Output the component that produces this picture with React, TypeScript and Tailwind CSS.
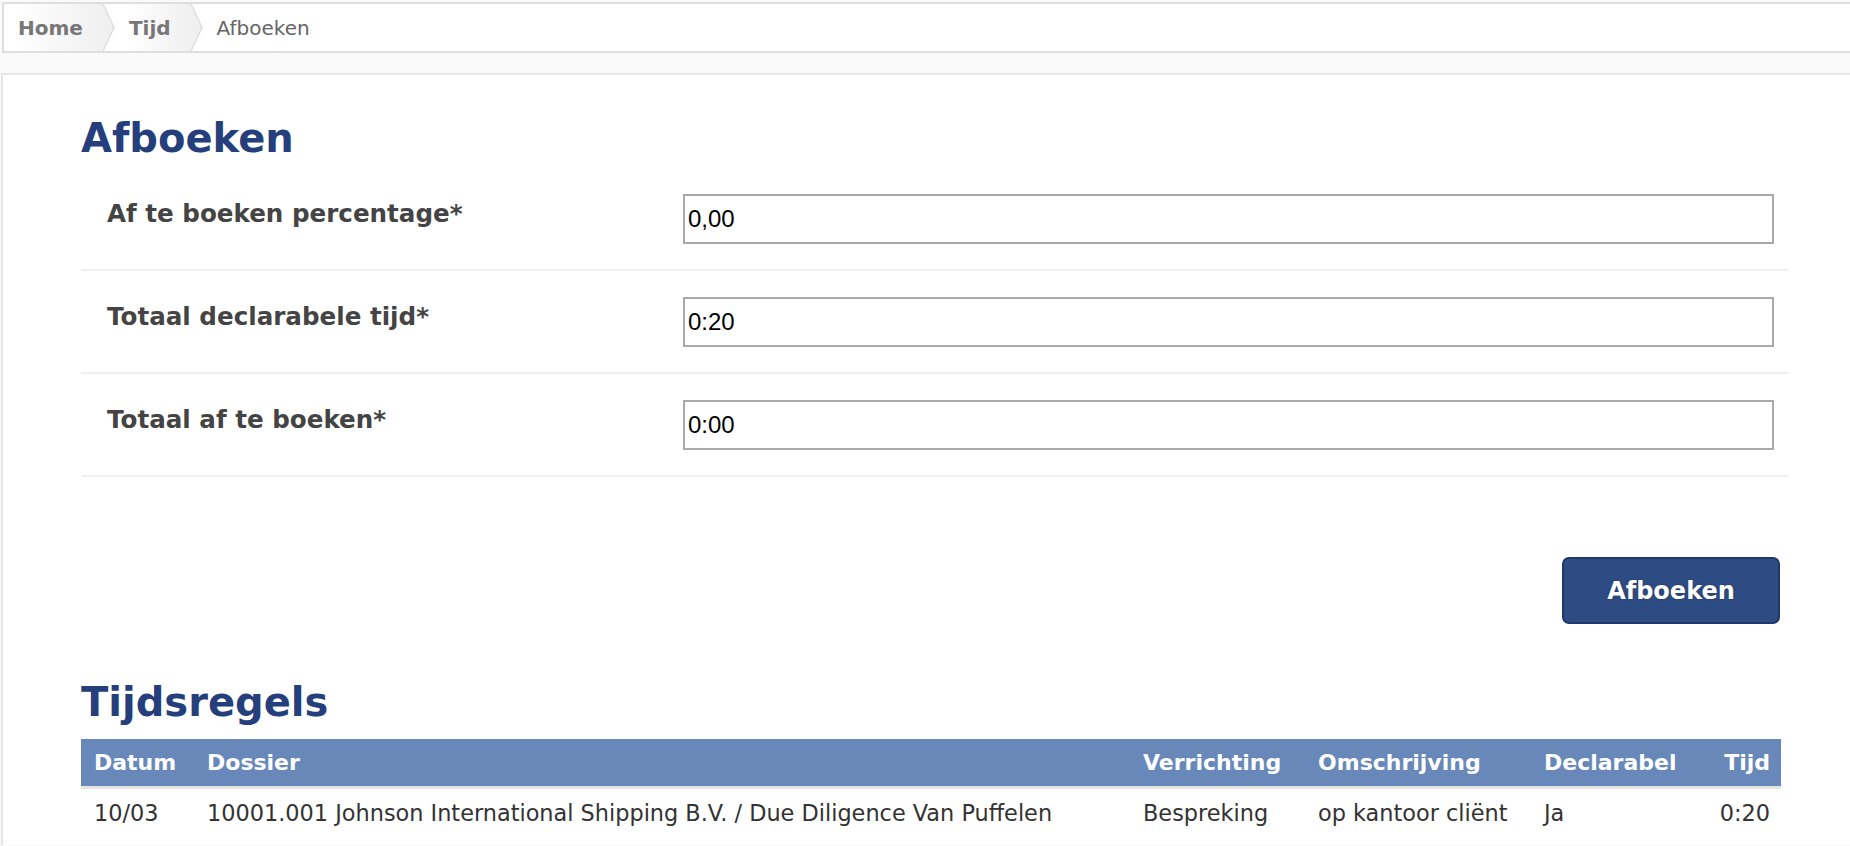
const font = { fontFamily: '"DejaVu Sans", Verdana, sans-serif' };

function Crumb({ label }: { label: string }) {
  return (
    <div className="relative flex h-full items-center">
      <div className="flex h-full items-center bg-gradient-to-r from-white to-[#f0f0f0] pl-[2px] pr-[18px]">
        <span className="text-[20px] font-bold text-[#777]">{label}</span>
      </div>
      <svg className="h-full w-[14px]" viewBox="0 0 14 49" preserveAspectRatio="none">
        <polygon points="0,0 2,0 13,24.5 2,49 0,49" fill="#f0f0f0" />
        <polyline points="2,0 13,24.5 2,49" fill="none" stroke="#dedede" strokeWidth="1.5" />
      </svg>
    </div>
  );
}

function FieldRow({ label, value }: { label: string; value: string }) {
  return (
    <div className="flex items-start border-b-2 border-[#efefef] pt-[26px] pb-[25px] pl-[26px] pr-[14px]">
      <div className="w-[576px] pt-[2px] text-[24.6px] font-bold text-[#444]">{label}</div>
      <input
        readOnly
        value={value}
        className="h-[50px] flex-1 border-2 border-[#a9a9a9] bg-white px-[3px] text-[24px] text-black outline-none"
        style={{ fontFamily: '"Liberation Sans", Arial, sans-serif' }}
      />
    </div>
  );
}

export default function App() {
  return (
    <div className="min-h-[846px] bg-[#fafafa]" style={font}>
      <div className="pt-[2px] pl-[2px]">
        <div className="flex h-[51px] items-stretch border-2 border-r-0 border-[#dedede] bg-white">
          <div className="flex items-center pl-[12px]">
            <Crumb label="Home" />
            <div className="w-[12px]" />
            <Crumb label="Tijd" />
            <span className="ml-[14px] text-[20px] text-[#666]">Afboeken</span>
          </div>
        </div>
      </div>

      <div className="mt-[20px] ml-px min-h-[772px] border-t-2 border-l-2 border-[#e6e6e6] bg-white pl-[78px] pr-[62px]">
        <h1 className="pt-[33px] text-[40px] font-bold leading-[60px] text-[#243f7b]">Afboeken</h1>

        <div>
          <FieldRow label="Af te boeken percentage*" value="0,00" />
          <FieldRow label="Totaal declarabele tijd*" value="0:20" />
          <FieldRow label="Totaal af te boeken*" value="0:00" />
        </div>

        <div className="flex justify-end pt-[80px] pr-[8px]">
          <button className="h-[67px] w-[218px] rounded-[7px] border-2 border-[#1f3769] bg-[#2e4c84] text-[24px] font-bold text-white [text-shadow:0_0_2px_#1a2d55]">
            Afboeken
          </button>
        </div>

        <h2 className="pt-[48px] text-[40px] font-bold leading-[60px] text-[#243f7b]">Tijdsregels</h2>

        <table className="mt-[7px] w-[1700px] table-fixed border-collapse">
          <colgroup>
            <col className="w-[112px]" />
            <col className="w-[936px]" />
            <col className="w-[175px]" />
            <col className="w-[226px]" />
            <col className="w-[171px]" />
            <col className="w-[80px]" />
          </colgroup>
          <thead>
            <tr className="border-b-[3px] border-[#e4e4e4] bg-[#6888b9] text-left text-[22px] font-bold text-white">
              <th className="h-[48px] pl-[13px]">Datum</th>
              <th className="h-[48px] pl-[14px]">Dossier</th>
              <th className="h-[48px] pl-[14px]">Verrichting</th>
              <th className="h-[48px] pl-[14px]">Omschrijving</th>
              <th className="h-[48px] pl-[14px]">Declarabel</th>
              <th className="h-[48px] pr-[11px] text-right">Tijd</th>
            </tr>
          </thead>
          <tbody className="text-[22.4px] text-[#333]">
            <tr>
              <td className="h-[52px] pl-[13px]">10/03</td>
              <td className="h-[52px] whitespace-nowrap pl-[14px]">10001.001 Johnson International Shipping B.V. / Due Diligence Van Puffelen</td>
              <td className="h-[52px] pl-[14px]">Bespreking</td>
              <td className="h-[52px] whitespace-nowrap pl-[14px]">op kantoor cliënt</td>
              <td className="h-[52px] pl-[14px]">Ja</td>
              <td className="h-[52px] pr-[11px] text-right">0:20</td>
            </tr>
          </tbody>
        </table>
      </div>
    </div>
  );
}
